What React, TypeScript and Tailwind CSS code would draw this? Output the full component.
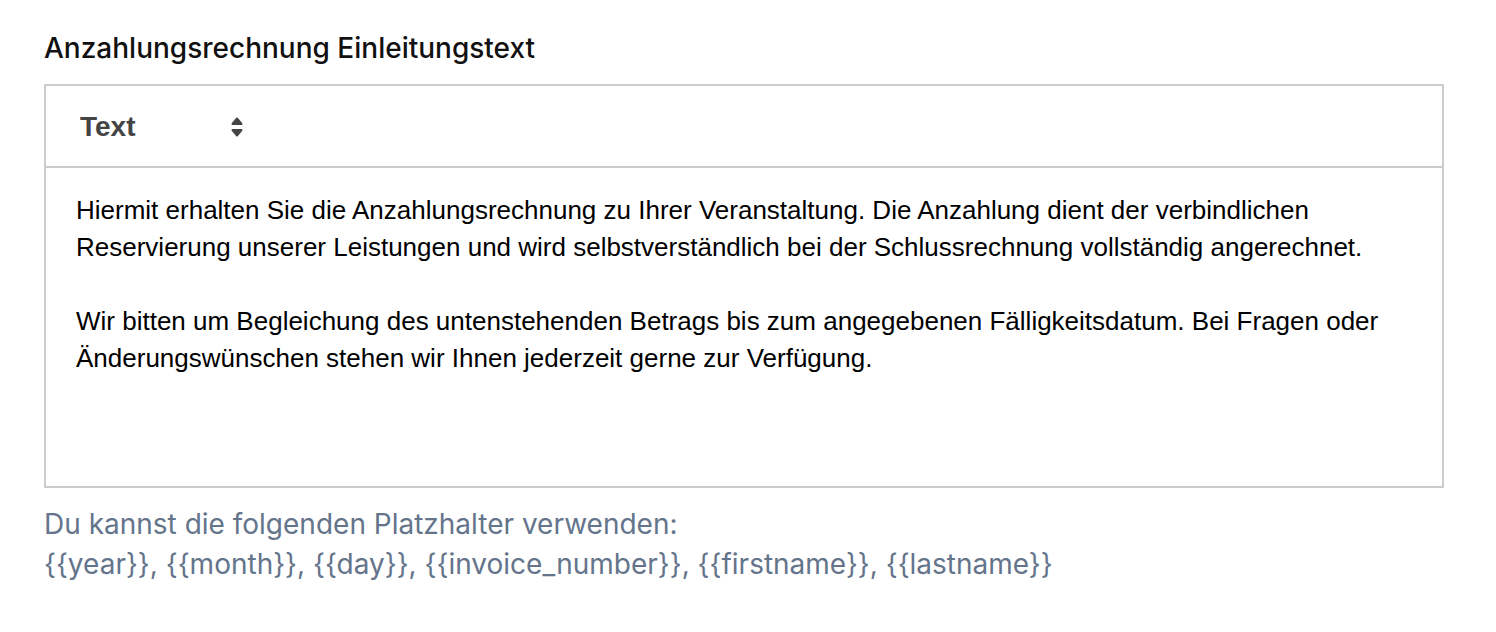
import React from "react";

export default function App() {
  return (
    <div className="min-h-[632px] bg-white pl-[44px] pt-[28px]" style={{ fontFamily: "Inter, 'Noto Sans', sans-serif" }}>
      <div className="text-[28px] leading-[40px] font-medium text-[#111111] mb-[16px]">
        Anzahlungsrechnung Einleitungstext
      </div>
      <div className="w-[1400px] border-2 border-[#cccccc]">
        <div className="h-[82px] border-b-2 border-[#cccccc] px-[16px] flex items-center pt-[2px]">
          <div className="w-[196px] flex items-center justify-between pl-[18px]">
            <span
              className="text-[28px] font-bold text-[#444444] leading-none"
              style={{ fontFamily: "'Liberation Sans', Arial, Helvetica, sans-serif" }}
            >
              Text
            </span>
            <svg width="12" height="20" viewBox="0 0 12 20" className="mr-[15px]">
              <polygon points="1.5,7 6,1.5 10.5,7" fill="#444444" stroke="#444444" strokeWidth="2" strokeLinejoin="round" />
              <polygon points="1.5,13 6,18.5 10.5,13" fill="#444444" stroke="#444444" strokeWidth="2" strokeLinejoin="round" />
            </svg>
          </div>
        </div>
        <div
          className="h-[318px] px-[30px] py-[24px] text-[26px] leading-[1.42] text-black"
          style={{ fontFamily: "'Liberation Sans', Arial, Helvetica, sans-serif" }}
        >
          <p>
            Hiermit erhalten Sie die Anzahlungsrechnung zu Ihrer Veranstaltung. Die Anzahlung dient der verbindlichen
            <br />
            Reservierung unserer Leistungen und wird selbstverständlich bei der Schlussrechnung vollständig angerechnet.
          </p>
          <p>
            <br />
          </p>
          <p>
            Wir bitten um Begleichung des untenstehenden Betrags bis zum angegebenen Fälligkeitsdatum. Bei Fragen oder
            <br />
            Änderungswünschen stehen wir Ihnen jederzeit gerne zur Verfügung.
          </p>
        </div>
      </div>
      <div className="mt-[16px] text-[28px] leading-[40px] text-[#64748b]">
        <div>Du kannst die folgenden Platzhalter verwenden:</div>
        <div>{"{{year}}, {{month}}, {{day}}, {{invoice_number}}, {{firstname}}, {{lastname}}"}</div>
      </div>
    </div>
  );
}
